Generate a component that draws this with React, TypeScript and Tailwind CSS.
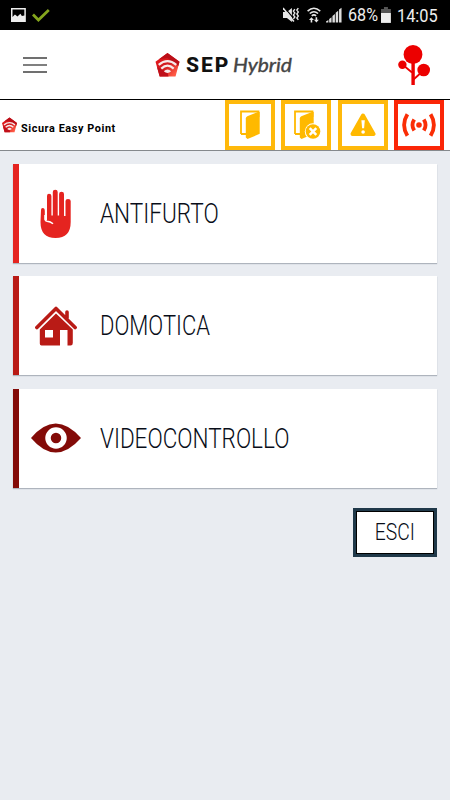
import React from 'react';

function SepLogo({ className, id }: { className: string; id: string }) {
  return (
    <svg viewBox="0 0 24 24" className={className}>
      <defs>
        <linearGradient id={id} x1="0" y1="0" x2="1" y2="1">
          <stop offset="0.2" stopColor="#e1181c" />
          <stop offset="0.5" stopColor="#cf1a1f" />
          <stop offset="0.85" stopColor="#ff5a45" />
        </linearGradient>
      </defs>
      <path d="M12 0 L24 8.7 L20 23.5 H4.2 L0 8.7 Z" fill={'url(#' + id + ')'} />
      <path d="M12 0 L24 8.7 L22.8 13 L12 5 L3.5 6.2 Z" fill="#bb0f18" />
      <path d="M1.5 14 L12 19.5 L13 23.5 H4.2 Z" fill="#c0101a" />
      <g fill="none" stroke="#f7eaea" strokeWidth="2.2">
        <path d="M3.2 11.8 Q12 4.6 20.8 11.8" />
        <path d="M5.8 15.6 Q12 9.8 18.2 15.6" />
      </g>
      <path d="M8.3 18.3 Q12 14.5 15.7 18.3 Q12 21.8 8.3 18.3Z" fill="#f7eaea" />
    </svg>
  );
}

function StatusBar() {
  return (
    <div className="flex h-[30px] shrink-0 items-center bg-black pl-[11px] pr-3">
      <svg viewBox="0 0 15 15" className="h-[15px] w-[15px]">
        <path fillRule="evenodd" d="M0 0H15V14H0Z M1.5 1.5V9L4 6.6L6.5 8.5L9.5 5.7L11 8L13.5 7.5V1.5Z" fill="#eee" />
      </svg>
      <svg viewBox="0 0 18 13" className="ml-1.5 h-[13px] w-[18px]">
        <path d="M1 5.5 L6.5 11 L17 1" fill="none" stroke="#84a51d" strokeWidth="2.8" />
      </svg>
      <svg viewBox="0 0 17 16" className="ml-[233px] h-4 w-[17px]">
        <path d="M0 5H4L9 0.8V15L4 11H0Z" fill="#e6e6e6" />
        <path d="M1 0 L12 13" stroke="#000" strokeWidth="1.2" />
        <path d="M0 .8 L11 14.5" stroke="#e6e6e6" strokeWidth="1.6" />
        <path d="M12 2l-1.5 2 1.5 2-1.5 2 1.5 2-1.5 2 M15.5 1l-1.5 2 1.5 2-1.5 2 1.5 2-1.5 2 1.5 2" fill="none" stroke="#e6e6e6" strokeWidth="1.4" />
      </svg>
      <svg viewBox="0 0 14 16" className="ml-2 h-4 w-3.5">
        <g fill="none" stroke="#e8e8e8" strokeWidth="1.6">
          <path d="M.6 4Q7-1.6 13.4 4M2.8 6.5Q7 3 11.2 6.5M4.8 8.8Q7 7 9.2 8.8" />
        </g>
        <path d="M4.5 10.3L2 13h1.7v2.5h1.6V13H7Z M9.5 15.5L7 12.8h1.7v-2.5h1.6v2.5H12Z" fill="#e8e8e8" />
      </svg>
      <svg viewBox="0 0 16 16" className="ml-[5px] h-4 w-4">
        <path d="M0 15.5v-1l2.4-1.5v2.5Z M3.2 15.5V12l2.4-1.8v5.3Z M6.5 15.5V9l2.5-2v8.5Z M9.8 15.5V5.7l2.5-2v11.8Z M13.2 15.5V2.4l2.5-1.8v14.9Z" fill="#ddd" />
      </svg>
      <div className="ml-1.5 w-[30px] whitespace-nowrap font-['Roboto'] text-[19px] leading-5 text-[#eee]">
        <span className="inline-block origin-left scale-x-[0.85]">68%</span>
      </div>
      <svg viewBox="0 0 10 16" className="ml-[3px] h-4 w-2.5">
        <path d="M3 0H7V2H10V6H0V2H3Z" fill="#555" />
        <path d="M0 6H10V16H0Z" fill="#eee" />
      </svg>
      <div className="ml-1.5 w-[41px] whitespace-nowrap pt-px font-['Roboto'] text-[19px] leading-5 text-[#eee]">
        <span className="inline-block origin-left scale-x-[0.86]">14:05</span>
      </div>
    </div>
  );
}

function Header() {
  return (
    <header className="flex h-[70px] shrink-0 items-center border-b border-black bg-white pl-[23px] pr-[20px]">
      <div className="flex flex-col gap-[5px]">
        <div className="h-0.5 w-6 bg-[#707070]" />
        <div className="h-0.5 w-6 bg-[#808080]" />
        <div className="h-0.5 w-6 bg-[#707070]" />
      </div>
      <SepLogo id="logo-large" className="ml-[108px] h-6 w-[25px]" />
      <div className="ml-[6px] w-[44px] whitespace-nowrap pt-px font-['Roboto'] text-[21px] font-extrabold leading-6 tracking-[2px] text-[#111]">
        <span className="inline-block origin-left">SEP</span>
      </div>
      <div className="ml-[3px] w-[61px] whitespace-nowrap pb-px font-['Lato'] text-[20px] italic leading-6 text-[#444] [-webkit-text-stroke:0.4px_#444]">
        <span className="inline-block origin-left scale-x-[1.05]">Hybrid</span>
      </div>
      <svg viewBox="0 0 32 40" className="ml-auto h-10 w-8">
        <g fill="#ec0000">
          <circle cx="15" cy="9.5" r="9.4" />
          <circle cx="4.4" cy="19.7" r="4.2" />
          <circle cx="25.7" cy="25" r="6.3" />
          <path d="M13.4 15H16.8V40H13.4Z" />
        </g>
        <path d="M5 20L14 27.5M25 26L15.5 34.5" stroke="#ec0000" strokeWidth="1.8" />
      </svg>
    </header>
  );
}

function Door({ closed = false }: { closed?: boolean }) {
  return (
    <svg viewBox="0 0 27 30" className="h-[30px] w-[27px]">
      <path d="M1 24V1.5H18.5V7M1 24H7" fill="none" stroke="#ffb900" strokeWidth="1.8" />
      <path d="M5.8 8.5Q5.8 7 7.3 6.3L18 2H19.7V23.8L7.5 29L5.8 27.5Z" fill="#ffb900" />
      {closed && (
        <>
          <circle cx="19" cy="21.5" r="8.2" fill="#fff" />
          <circle cx="19" cy="21.5" r="7.3" fill="#ffb900" />
          <path d="M15.7 18.2L22.3 24.8M22.3 18.2L15.7 24.8" stroke="#fff" strokeWidth="2.5" />
        </>
      )}
    </svg>
  );
}

function Tile({ danger, children }: { danger?: boolean; children: React.ReactNode }) {
  return (
    <button className={'flex h-[50px] w-[50px] items-center justify-center border-4 ' + (danger ? 'border-[#fb2607]' : 'border-[#ffb90b]')}>
      {children}
    </button>
  );
}

function Toolbar() {
  return (
    <div className="flex h-[51px] shrink-0 border-b border-[#85898d] bg-white pl-[2px] pr-1.5">
      <SepLogo id="logo-small" className="mt-[17px] h-4 w-[15px]" />
      <div className="ml-1 mt-[22px] w-[95px] whitespace-nowrap font-['Roboto'] text-[11px] font-bold leading-[14px] tracking-[0.6px] text-black">
        <span className="inline-block origin-left scale-x-[0.985]">Sicura Easy Point</span>
      </div>
      <div className="ml-auto flex gap-[6.4px]">
        <Tile>
          <span className="ml-[7px]"><Door /></span>
        </Tile>
        <Tile>
          <span className="ml-[3px]"><Door closed /></span>
        </Tile>
        <Tile>
          <svg viewBox="0 0 26 24" className="h-6 w-[26px]">
            <path d="M13 2.5L23.5 21H2.5Z" fill="#ffb900" stroke="#ffb900" strokeWidth="4" strokeLinejoin="round" />
            <path d="M11.4 7.2H14.8L14.1 15.2H12.1Z" fill="#fff" />
            <circle cx="13.1" cy="19" r="1.8" fill="#fff" />
          </svg>
        </Tile>
        <Tile danger>
          <svg viewBox="0 0 34 24" className="h-6 w-[34px] shrink-0">
            <circle cx="17" cy="12" r="2.8" fill="#fa2d05" />
            <g fill="none" stroke="#fa2d05" strokeWidth="3.8">
              <path d="M12.2 6.4Q8.7 12 12.2 17.6M21.8 6.4Q25.3 12 21.8 17.6M5.4 1.3Q-1.2 12 5.4 22.7M28.6 1.3Q35.2 12 28.6 22.7" />
            </g>
          </svg>
        </Tile>
      </div>
    </div>
  );
}

function Card({ bar, label, fit, children }: { bar: string; label: string; fit: string; children: React.ReactNode }) {
  return (
    <button className={'flex h-[99px] items-center border-l-[6px] bg-white text-left shadow-[0_1px_1px_#aeb4bd] ' + bar}>
      <span className="flex w-[75px] justify-center">{children}</span>
      <span className={"ml-[6.5px] inline-block origin-left whitespace-nowrap font-['Roboto'] text-[27.5px] font-light text-[#080d18] " + fit}>
        {label}
      </span>
    </button>
  );
}

export default function App() {
  return (
    <div className="flex h-[800px] w-[450px] flex-col overflow-hidden bg-[#e9ecf1] font-['Roboto',sans-serif]">
      <StatusBar />
      <Header />
      <Toolbar />
      <main className="flex flex-col gap-[13.4px] px-[12.7px] pt-[13px]">
        <Card bar="border-[#e52420]" label="ANTIFURTO" fit="scale-x-[0.82]">
          <svg viewBox="0 0 32 50" className="mt-[1px] h-[50px] w-8">
            <path d="M1 21Q1 19 2.7 19Q4.8 19 4.8 22V31L7 31.5V7Q7 4.8 9 4.8Q11.4 4.8 11.4 7V26.5H12.8V3Q12.8 .8 15.2 .8Q17.7 .8 17.7 3V26.5H19.1V5Q19.1 2.8 21.5 2.8Q24 2.8 24 5V27H25.5V12Q25.5 10 28 10Q30.7 10 30.7 12V33Q30.7 49 15.5 49Q.5 49 .5 33Z" fill="#e52420" />
            <path d="M5 26V30.5Q5.2 32 7 32.2Q10.5 32.5 13 34.8" fill="none" stroke="#fff" strokeWidth="1.5" />
          </svg>
        </Card>
        <Card bar="border-[#b91b16]" label="DOMOTICA" fit="scale-x-[0.8]">
          <svg viewBox="0 0 42 40" className="h-10 w-[42px]">
            <path d="M1.9 21.5L21 2.5L40.1 21.5M32 12V6" fill="none" stroke="#b91b16" strokeWidth="3.6" strokeLinecap="round" strokeLinejoin="round" />
            <path fillRule="evenodd" d="M4.8 23.5L21 7.5L37.8 23.5V37Q37.8 39.5 35.5 39.5H32.5V24H25V39.5H6.5Q4.8 39.5 4.8 37.5ZM10 24V31.5H18V24Z" fill="#b91b16" />
          </svg>
        </Card>
        <Card bar="border-[#830b08]" label="VIDEOCONTROLLO" fit="scale-x-[0.818]">
          <svg viewBox="0 0 50 30" className="-mt-px h-[30px] w-[50px]">
            <path d="M0 15Q24.5-14 50 15Q24.5 44 0 15Z" fill="#830b08" />
            <circle cx="25" cy="15" r="8" fill="none" stroke="#fff" strokeWidth="5.5" />
          </svg>
        </Card>
        <button className="mt-[6.8px] flex h-[49px] w-[84px] items-center justify-center self-end border-[3px] border-[#20394a] bg-white pt-0.5 outline-1 -outline-offset-4 outline-black">
          <span className="inline-block scale-x-[0.84] whitespace-nowrap font-['Roboto'] text-[23px] font-light text-[#080d18]">ESCI</span>
        </button>
      </main>
    </div>
  );
}
